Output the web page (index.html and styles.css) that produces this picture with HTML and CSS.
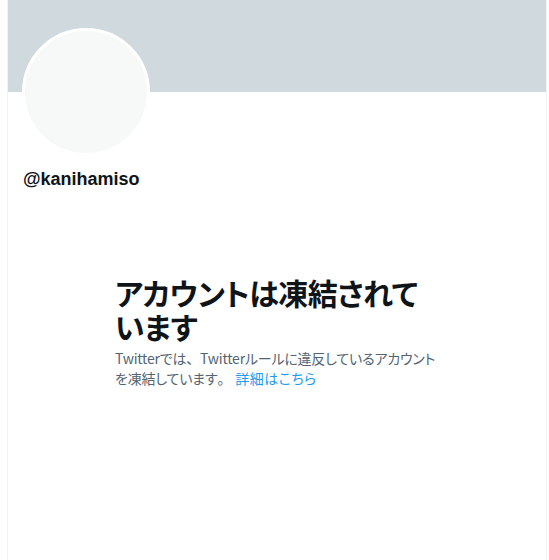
FILE: index.html
```html
<!DOCTYPE html>
<html lang="ja">

<head>
    <meta charset="UTF-8">
    <meta name="viewport" content="width=device-width, initial-scale=1.0">
    <link rel="stylesheet" href="styles.css">

    <title>@kanihamiso</title>
</head>

<body>
<div id="column">
    <div class="banner"></div>
    <div class="profile">
        <div class="avatar"></div>
        <div class="handle">@kanihamiso</div>
    </div>
    <div class="empty">
        <h1 class="empty-title">アカウントは凍結されています</h1>
        <p class="empty-text">Twitterでは<span class="punct">、</span>Twitterルールに違反しているアカウントを凍結しています<span class="punct">。</span><a href="#">詳細はこちら</a></p>
    </div>
</div>
</body>

</html>
```

FILE: styles.css
```css
* {
    margin: 0;
    padding: 0;
    box-sizing: border-box;
}

body {
    background: #fff;
    font-family: "Noto Sans CJK JP", "Liberation Sans", sans-serif;
    color: #0f1419;
}

#column {
    margin-left: 7px;
    width: 540px;
    min-height: 560px;
    border-left: 1px solid #eff3f4;
    border-right: 1px solid #eff3f4;
}

.banner {
    height: 92px;
    background-color: #cfd9de;
}

.profile {
    padding: 0 14px;
}

.avatar {
    width: 128px;
    height: 128px;
    margin-top: -64px;
    border-radius: 50%;
    border: 3px solid #fff;
    background-color: #f7f9f9;
}

.handle {
    margin-top: 12px;
    margin-left: 1px;
    font-family: "Liberation Sans", "Noto Sans", sans-serif;
    font-weight: bold;
    font-size: 18px;
    line-height: 22px;
}

.empty {
    width: 330px;
    margin: 85px 0 0 107px;
    font-feature-settings: "palt";
}

.empty-title {
    max-width: 310px;
    font-size: 30px;
    line-height: 34px;
    letter-spacing: -0.5px;
    font-weight: bold;
}

.empty-title,
.empty-text {
    word-break: break-all;
}

.empty-text {
    margin-top: 5px;
    font-size: 14px;
    line-height: 20px;
    letter-spacing: -0.2px;
    color: #536471;
}

.empty-text .punct {
    font-feature-settings: normal;
}

.empty-text a {
    margin-left: 4px;
    letter-spacing: 0.5px;
    color: #1d9bf0;
    text-decoration: none;
}
```
